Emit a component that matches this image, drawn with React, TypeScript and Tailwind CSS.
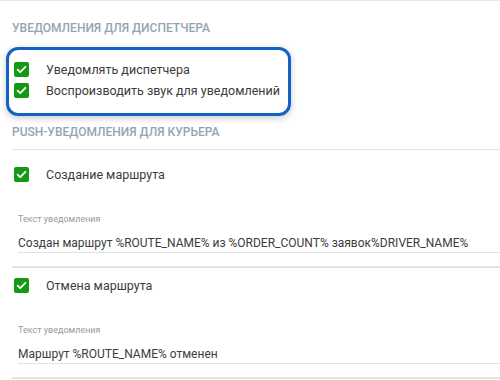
const Check = () => (
  <span className="flex h-[15px] w-[15px] shrink-0 items-center justify-center rounded-[2px] bg-[#129a12]">
    <svg width="15" height="15" viewBox="0 0 15 15" fill="none">
      <path d="M3.6 7.6l2.6 2.6 5.2-5.4" stroke="#fff" strokeWidth="1.8" strokeLinecap="round" strokeLinejoin="round" />
    </svg>
  </span>
);

const CheckRow = ({ label, className = '' }: { label: string; className?: string }) => (
  <div className={`flex h-[15px] items-center ${className}`}>
    <Check />
    <span className="ml-[17px] text-[12.5px] leading-[15px] text-[#3c3c3c]">{label}</span>
  </div>
);

const Heading = ({ children, className = '' }: { children: string; className?: string }) => (
  <div className={`ml-[12px] text-[12px] font-medium uppercase leading-[14px] text-[#93a5b1] ${className}`}>
    {children}
  </div>
);

const TextField = ({ value, className = '' }: { value: string; className?: string }) => (
  <div className={`ml-[18px] ${className}`}>
    <div className="text-[9px] leading-[12px] text-[#9a9a9a]">Текст уведомления</div>
    <div className="mt-[10px] border-b border-[#e2e2e2] pb-[1px] text-[12px] leading-[16px] text-[#3c3c3c]">
      {value}
    </div>
  </div>
);

export default function App() {
  return (
    <div className="flex h-[380px] w-[500px] flex-col overflow-hidden border-t border-[#e8e8e8] bg-white font-['Roboto',sans-serif]">
      <Heading className="mt-[20px]">Уведомления для диспетчера</Heading>

      <div className="ml-[6px] mt-[12px] w-[285px] rounded-[12px] border-[3px] border-[#1262c4] pb-[15px] pl-[5px] pt-[12px] shadow-[0_2px_7px_rgba(0,0,0,0.22)]">
        <CheckRow label="Уведомлять диспетчера" />
        <CheckRow label="Воспроизводить звук для уведомлений" className="mt-[6px]" />
      </div>

      <Heading className="mt-[9px]">Push-уведомления для курьера</Heading>
      <div className="ml-[12px] mt-[10px] h-px bg-[#e4e4e4]" />

      <CheckRow label="Создание маршрута" className="ml-[14px] mt-[17px]" />
      <TextField value="Создан маршрут %ROUTE_NAME% из %ORDER_COUNT% заявок%DRIVER_NAME%" className="mt-[31px]" />

      <div className="ml-[12px] mt-[13px] h-[2px] bg-[#e4e4e4]" />

      <CheckRow label="Отмена маршрута" className="ml-[14px] mt-[10px]" />
      <TextField value="Маршрут %ROUTE_NAME% отменен" className="mt-[31px]" />

      <div className="ml-[12px] mt-[13px] h-[2px] bg-[#e4e4e4]" />
    </div>
  );
}
